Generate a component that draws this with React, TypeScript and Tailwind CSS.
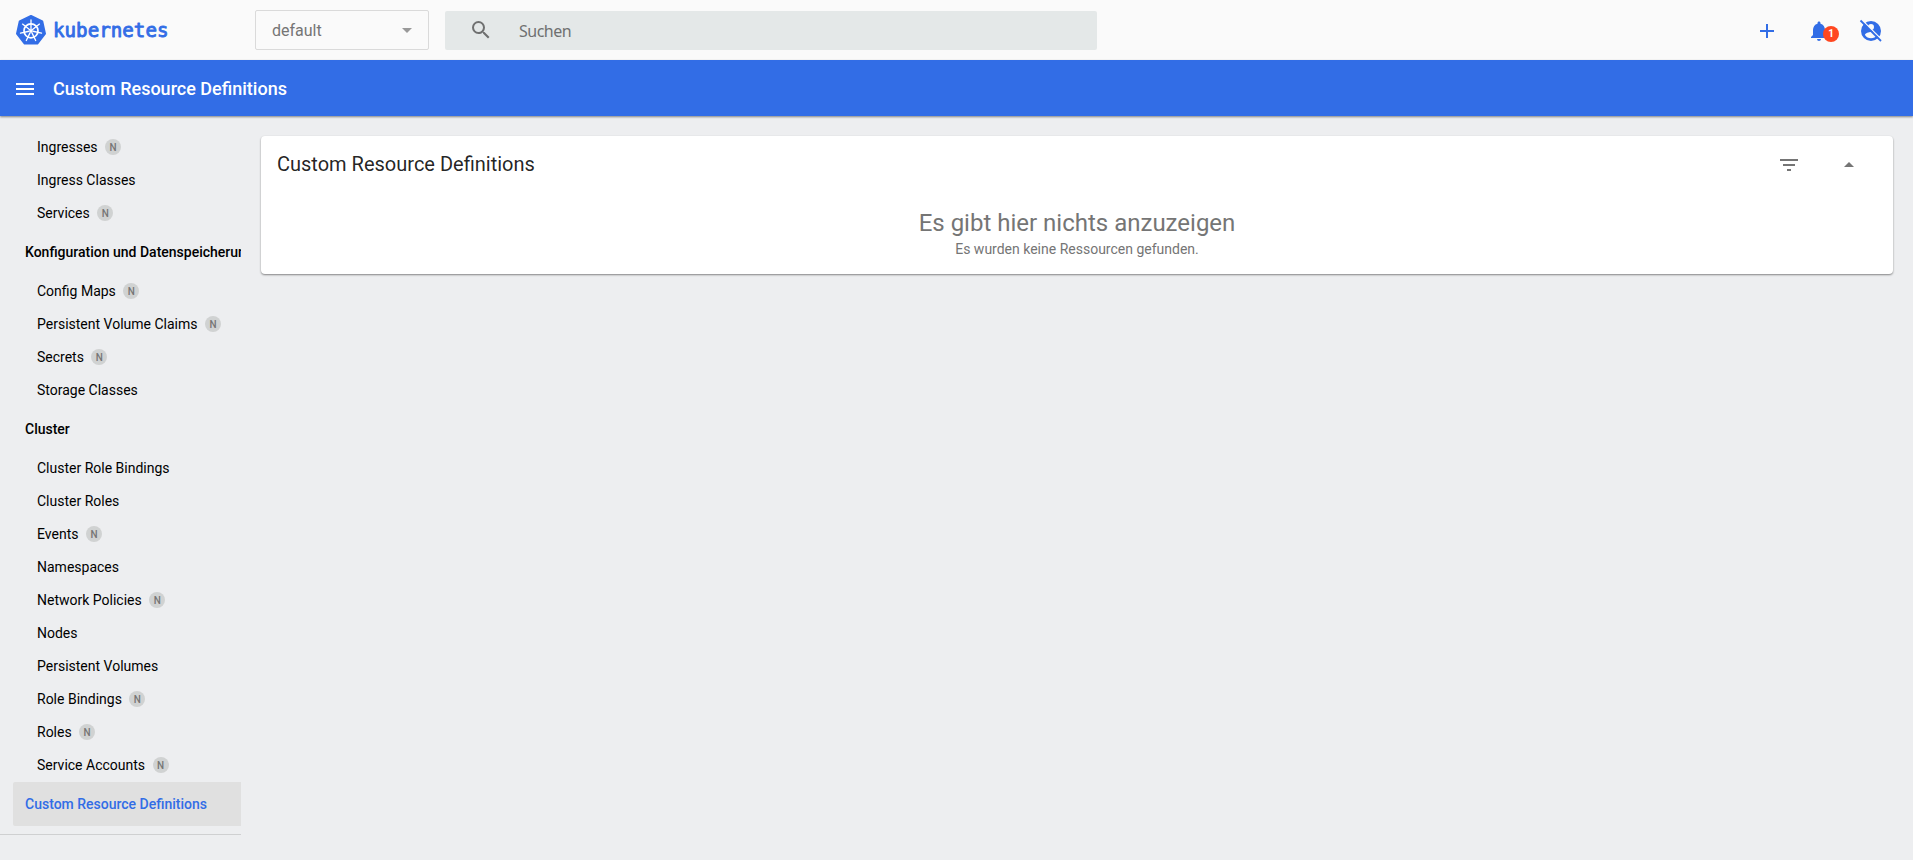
import {
  MdAdd,
  MdArrowDropDown,
  MdArrowDropUp,
  MdFilterList,
  MdMenu,
  MdNotifications,
  MdSearch,
} from "react-icons/md";

type Item = { label: string; namespaced?: boolean };

const serviceItems: Item[] = [
  { label: "Ingresses", namespaced: true },
  { label: "Ingress Classes" },
  { label: "Services", namespaced: true },
];

const configItems: Item[] = [
  { label: "Config Maps", namespaced: true },
  { label: "Persistent Volume Claims", namespaced: true },
  { label: "Secrets", namespaced: true },
  { label: "Storage Classes" },
];

const clusterItems: Item[] = [
  { label: "Cluster Role Bindings" },
  { label: "Cluster Roles" },
  { label: "Events", namespaced: true },
  { label: "Namespaces" },
  { label: "Network Policies", namespaced: true },
  { label: "Nodes" },
  { label: "Persistent Volumes" },
  { label: "Role Bindings", namespaced: true },
  { label: "Roles", namespaced: true },
  { label: "Service Accounts", namespaced: true },
];

function NavItems({ items }: { items: Item[] }) {
  return (
    <ul>
      {items.map((item) => (
        <li key={item.label} className="flex h-[33px] items-center pl-[37px]">
          <span>{item.label}</span>
          {item.namespaced && (
            <span className="mt-px ml-[7.5px] flex size-4 items-center justify-center rounded-full bg-[#d0d2d2] pt-px text-[10px] leading-none font-medium text-[#757575]">
              N
            </span>
          )}
        </li>
      ))}
    </ul>
  );
}

function NavGroup({ title }: { title: string }) {
  return (
    <div className="flex h-[45px] items-center overflow-hidden pl-[25px] font-medium whitespace-nowrap">
      {title}
    </div>
  );
}

function UserOffIcon() {
  return (
    <svg viewBox="0 0 24 24" className="size-6 text-[#326de6]" fill="currentColor">
      <path d="M12 2a10 10 0 1 0 0 20 10 10 0 0 0 0-20Zm0 3a3 3 0 1 1 0 6 3 3 0 0 1 0-6Zm0 14.200a7.200 7.200 0 0 1-6-3.220c.030-1.990 4-3.080 6-3.080s5.970 1.090 6 3.080a7.200 7.200 0 0 1-6 3.220Z" />
      <path d="M3 1 23 21" stroke="#fafafa" strokeWidth="1.500" />
      <path d="M1.500 1.500 22 22" stroke="currentColor" strokeWidth="1.800" />
    </svg>
  );
}

function KubernetesLogo() {
  const spokes = [0, 1, 2, 3, 4, 5, 6];
  return (
    <svg viewBox="0 0 160 32" className="h-8 w-40" fill="none">
      <path
        d="M16 2 27.300 7.400 30 19.600 22.300 29.600H9.700L2 19.600 4.700 7.400Z"
        fill="#326de6"
        stroke="#326de6"
        strokeWidth="2"
        strokeLinejoin="round"
      />
      <circle cx="16" cy="16.800" r="7" stroke="#fff" strokeWidth="1.700" />
      {spokes.map((n) => (
        <path
          key={n}
          d="M16 14.800V6"
          stroke="#fff"
          strokeWidth="1.300"
          strokeLinecap="round"
          transform={`rotate(${(n * 360) / 7} 16 16.800)`}
        />
      ))}
      <circle cx="16" cy="16.800" r="1.700" fill="#fff" />
      <text
        x="38"
        y="23.300"
        textLength="115.500"
        lengthAdjust="spacingAndGlyphs"
        fontFamily="'DejaVu Sans Mono', monospace"
        fontSize="19.500"
        fill="#326de6"
        stroke="#326de6"
        strokeWidth="0.900"
        strokeLinejoin="round"
      >
        kubernetes
      </text>
    </svg>
  );
}

export default function App() {
  return (
    <div className="flex h-[860px] flex-col overflow-hidden bg-[#edeef0] font-['Roboto',sans-serif] text-sm text-black">
      <header className="flex h-[60px] shrink-0 items-center bg-[#fafafa]">
        <div className="flex w-[255px] items-center pl-[15px]">
          <KubernetesLogo />
        </div>
        <div className="flex h-10 w-[174px] items-center justify-between rounded-xs border border-[#dadada] pr-[9px] pl-4 text-base text-[#757575]">
          <span className="pt-0.5">default</span>
          <MdArrowDropDown className="size-6 text-[#999]" />
        </div>
        <div className="mt-px ml-4 flex h-[39px] w-[652px] items-center rounded-xs bg-[#e4e8e8] pl-6 text-base text-[#6f7070]">
          <MdSearch className="mb-0.5 size-6" />
          <span className="ml-[26px] pt-px font-['Noto_Sans',sans-serif] tracking-[-0.5px]">
            Suchen
          </span>
        </div>
        <div className="ml-auto flex items-center pt-0.5 pr-[30px] text-[#326de6]">
          <MdAdd className="size-6" />
          <div className="relative ml-7">
            <MdNotifications className="size-6" />
            <span className="absolute top-[7px] left-4 flex size-4 items-center justify-center rounded-full bg-[#ff4720] text-[10px] font-bold text-white">
              1
            </span>
          </div>
          <div className="ml-7">
            <UserOffIcon />
          </div>
        </div>
      </header>

      <div className="z-10 flex h-14 shrink-0 items-center bg-[#326de6] pt-0.5 pl-[13px] text-white shadow-[0_1px_2px_rgba(0,0,0,0.45)]">
        <MdMenu className="size-6" />
        <h1 className="ml-4 text-lg font-medium">Custom Resource Definitions</h1>
      </div>

      <div className="flex min-h-0 flex-1">
        <nav className="w-[241px] shrink-0 overflow-hidden pt-3.5">
          <NavItems items={serviceItems} />
          <NavGroup title="Konfiguration und Datenspeicherung" />
          <NavItems items={configItems} />
          <NavGroup title="Cluster" />
          <NavItems items={clusterItems} />
          <div className="mt-px ml-[13px] flex h-11 items-center rounded-l-xs bg-[#e0e0e0] pl-3 font-medium text-[#326de6]">
            Custom Resource Definitions
          </div>
          <div className="mt-2 border-t border-[#cfd0d1]" />
        </nav>

        <main className="min-w-0 flex-1 pt-5 pr-5 pl-5">
          <section className="h-[138px] rounded bg-white shadow-[0_1px_2px_rgba(0,0,0,0.45)]">
            <div className="flex h-14 items-center pr-8 pl-4">
              <h2 className="text-xl text-black/87">Custom Resource Definitions</h2>
              <MdFilterList className="mt-0.5 ml-auto size-6 text-[#757575]" />
              <MdArrowDropUp className="mt-0.5 ml-9 size-6 text-[#757575]" />
            </div>
            <div className="flex flex-col items-center pt-4 text-[#757575]">
              <p className="text-2xl leading-[30px]">Es gibt hier nichts anzuzeigen</p>
              <p className="text-sm leading-[22px]">Es wurden keine Ressourcen gefunden.</p>
            </div>
          </section>
        </main>
      </div>
    </div>
  );
}
